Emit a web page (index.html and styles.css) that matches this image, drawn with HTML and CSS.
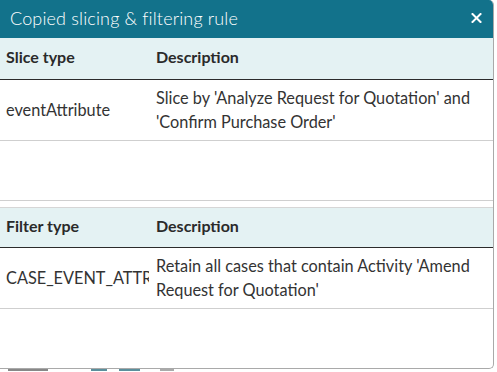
FILE: index.html
```html
<!DOCTYPE html>
<html>
<head>
<meta charset="utf-8">
<link rel="stylesheet" href="styles.css">
</head>
<body>
<div class="dialog">
  <div class="titlebar">
    <span class="title">Copied slicing &amp; filtering rule</span>
    <button class="close" aria-label="Close">
      <svg width="11" height="10" viewBox="0 0 11 10"><path d="M1.5 1 L9.5 9 M9.5 1 L1.5 9" stroke="#fff" stroke-width="2" stroke-linecap="square" fill="none"/></svg>
    </button>
  </div>
  <div class="content">
    <table class="rules">
      <colgroup><col class="c-type"><col></colgroup>
      <thead>
        <tr><th>Slice type</th><th>Description</th></tr>
      </thead>
      <tbody>
        <tr><td class="type"><div class="clip">eventAttribute</div></td><td>Slice by 'Analyze Request for Quotation' and 'Confirm Purchase Order'</td></tr>
        <tr class="empty"><td></td><td></td></tr>
      </tbody>
    </table>
    <table class="rules second">
      <colgroup><col class="c-type"><col></colgroup>
      <thead>
        <tr><th>Filter type</th><th>Description</th></tr>
      </thead>
      <tbody>
        <tr><td class="type"><div class="clip">CASE_EVENT_ATTRIBUTE</div></td><td>Retain all cases that contain Activity 'Amend Request for Quotation'</td></tr>
        <tr class="empty last"><td></td><td></td></tr>
      </tbody>
    </table>
  </div>
</div>
<div class="under">
  <span class="u1"></span><span class="u2"></span><span class="u3"></span><span class="u4"></span>
</div>
</body>
</html>
```
FILE: styles.css
```css
* { box-sizing: border-box; }
html, body { margin: 0; padding: 0; background: #fff; }
body { width: 497px; height: 372px; overflow: hidden; font-family: "Lato", "Open Sans", sans-serif; color: #333; }

.dialog {
  width: 494px;
  height: 369px;
  display: flex;
  flex-direction: column;
  border-right: 1px solid #a9a9a9;
  border-bottom: 1px solid #a9a9a9;
  border-top-right-radius: 5px;
  border-bottom-right-radius: 5px;
  overflow: hidden;
  background: #fff;
}

.titlebar {
  height: 38px;
  flex: none;
  background: #12728b;
  display: flex;
  align-items: center;
  justify-content: space-between;
  padding: 0 10px 2px 10px;
}
.title {
  color: #fff;
  font-family: "Lato", sans-serif;
  font-weight: 300;
  font-size: 18px;
  letter-spacing: 0.15px;
}
.close {
  background: none;
  border: 0;
  padding: 0;
  margin-right: 1px;
  display: flex;
  width: 11px;
  height: 10px;
}

.content { flex: 1; }

.rules {
  width: 100%;
  border-collapse: collapse;
  table-layout: fixed;
  font-size: 16.3px;
}
.c-type { width: 150px; }
.rules th {
  background: #e4f2f3;
  text-align: left;
  font-weight: 700;
  font-size: 16px;
  height: 41px;
  padding: 0 6px 3px 6px;
  border-bottom: 1px solid #2b2b2b;
  color: #2a2a2a;
}
.rules td {
  height: 61px;
  padding: 0 2px 0 6px;
  border-bottom: 1px solid #cfcfcf;
  line-height: 24px;
  vertical-align: middle;
  color: #333;
}
.rules td.type { padding-right: 0; }
.clip { white-space: nowrap; overflow: hidden; width: 143px; }
.rules td + td { padding-left: 6px; padding-right: 6px; }
.rules tr.empty td { height: 60px; }
.rules tr.last td { border-bottom: 0; height: 59px; }

.second { margin-top: 6px; border-top: 1px solid #d6d6d6; }
.second th { height: 40px; }

.under { position: relative; height: 3px; }
.under span { position: absolute; top: 0; height: 2px; background: #9aa; }
.under .u1 { left: 8px; width: 40px; background: #888; }
.under .u2 { left: 91px; width: 16px; background: #5b8f9c; }
.under .u3 { left: 119px; width: 21px; background: #5b8f9c; }
.under .u4 { left: 160px; width: 14px; background: #aaa; }
```
